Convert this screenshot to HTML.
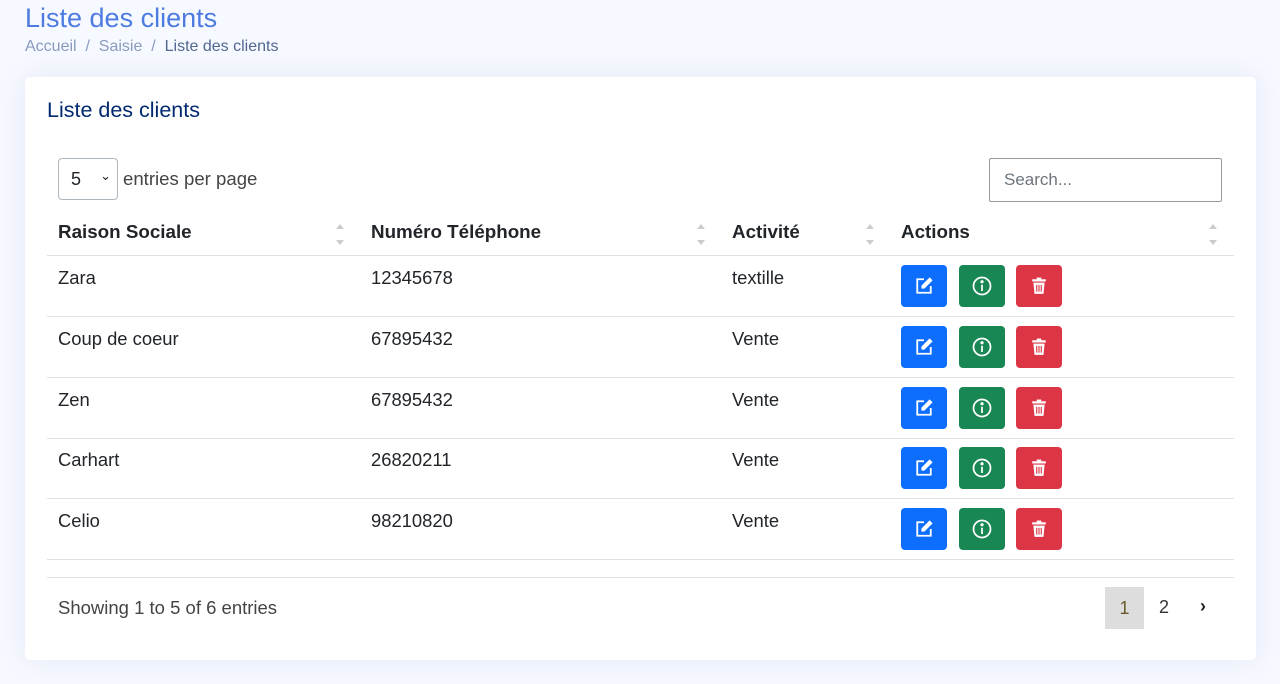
<!DOCTYPE html>
<html><head><meta charset="utf-8"><style>
*{box-sizing:border-box;margin:0;padding:0}
body{width:1280px;height:684px;background:#f6f9ff;font-family:"Liberation Sans",sans-serif;position:relative;overflow:hidden;color:#212529}
.a{position:absolute}
h1{position:absolute;left:25px;top:3px;font-size:27px;font-weight:400;color:#4d7be0}
.bc{left:25px;top:38px;font-size:16px;color:#899bbd}
.bc b{font-weight:400;color:#51678f}
.card{left:25px;top:77px;width:1231px;height:583px;background:#fff;border-radius:5px;box-shadow:0 0 30px rgba(1,41,112,.08)}
.ct{left:47px;top:98px;font-size:21.5px;color:#012970}
.sel{left:58px;top:158px;width:60px;height:42px;border:1px solid #adb5bd;border-radius:4px;font-size:18px;padding:10px 12px}
.srch{left:989px;top:158px;width:233px;height:44px;border:1px solid #999;border-radius:2px;font-size:17px;color:#6c757d;padding:11px 14px}
.th{top:221px;font-size:18.8px;font-weight:700}
.td{font-size:18.4px}
.line{left:47px;width:1187px;height:1px;background:#dee2e6}
.btn{width:46px;height:42px;border-radius:4px;display:flex;align-items:center;justify-content:center}
.ar{width:0;height:0;border-left:4px solid transparent;border-right:4px solid transparent}
</style></head><body>
<h1>Liste des clients</h1>
<div class="a bc">Accueil &nbsp;/&nbsp; Saisie &nbsp;/&nbsp; <b>Liste des clients</b></div>
<div class="a card"></div>
<div class="a ct">Liste des clients</div>
<div class="a sel">5 <span style="position:absolute;right:6px;top:9px;font-size:13px">&#8964;</span></div>
<div class="a" style="left:123px;top:168px;font-size:18.6px;color:#444">entries per page</div>
<div class="a srch">Search...</div>
<div class="a th" style="left:58px">Raison Sociale</div>
<div class="a th" style="left:371px">Numéro Téléphone</div>
<div class="a th" style="left:732px">Activité</div>
<div class="a th" style="left:901px">Actions</div>
<div class="a ar" style="left:336px;top:224px;border-bottom:5px solid #ccc"></div><div class="a ar" style="left:336px;top:240px;border-top:5px solid #ccc"></div>
<div class="a ar" style="left:697px;top:224px;border-bottom:5px solid #ccc"></div><div class="a ar" style="left:697px;top:240px;border-top:5px solid #ccc"></div>
<div class="a ar" style="left:866px;top:224px;border-bottom:5px solid #ccc"></div><div class="a ar" style="left:866px;top:240px;border-top:5px solid #ccc"></div>
<div class="a ar" style="left:1209px;top:224px;border-bottom:5px solid #ccc"></div><div class="a ar" style="left:1209px;top:240px;border-top:5px solid #ccc"></div>
<div class="a line" style="top:255px"></div>
<div id="rows"></div>
<div class="a line" style="top:577px"></div>
<div class="a" style="left:58px;top:597px;font-size:18.5px;color:#444">Showing 1 to 5 of 6 entries</div>
<div class="a" style="left:1105px;top:587px;width:39px;height:42px;background:#ddd;color:#6b5a2a;font-size:18px;text-align:center;line-height:42px">1</div>
<div class="a" style="left:1159px;top:597px;font-size:18px;color:#333">2</div>
<div class="a" style="left:1200px;top:596px;font-size:18px;font-weight:700">›</div>
<script>
var d=[["Zara","12345678","textille"],["Coup de coeur","67895432","Vente"],["Zen","67895432","Vente"],["Carhart","26820211","Vente"],["Celio","98210820","Vente"]];
var tops=[255,316,377,437,498],h="";
var ed='<svg width="18" height="18" viewBox="0 0 16 16" fill="none" stroke="#fff" stroke-width="1.6"><path d="M8 2H2v12h12V8"/><path d="M13 1.5l1.5 1.5L8 9.5H6.5V8z" fill="#fff"/></svg>';
var inf='<svg width="20" height="20" viewBox="0 0 16 16" fill="none" stroke="#fff" stroke-width="1.4"><circle cx="8" cy="8" r="6.8"/><path d="M8 7v5"/><circle cx="8" cy="4.6" r=".6" fill="#fff"/></svg>';
var tr='<svg width="16" height="18" viewBox="0 0 14 16" fill="#fff"><rect x="1" y="2" width="12" height="2"/><rect x="5" y="0.5" width="4" height="2"/><path d="M2 5h10l-1 10H3z"/><path d="M5 7v6M7 7v6M9 7v6" stroke="#dc3545" stroke-width="1"/></svg>';
d.forEach(function(r,i){var t=tops[i];
h+='<div class="a td" style="left:58px;top:'+(t+12)+'px">'+r[0]+'</div><div class="a td" style="left:371px;top:'+(t+12)+'px">'+r[1]+'</div><div class="a td" style="left:732px;top:'+(t+12)+'px">'+r[2]+'</div>';
h+='<div class="a btn" style="left:901px;top:'+(t+10)+'px;background:#0d6efd">'+ed+'</div><div class="a btn" style="left:959px;top:'+(t+10)+'px;background:#198754">'+inf+'</div><div class="a btn" style="left:1016px;top:'+(t+10)+'px;background:#dc3545">'+tr+'</div>';
h+='<div class="a line" style="top:'+(t+61)+'px"></div>';});
document.getElementById('rows').innerHTML=h;
</script>
</body></html>
